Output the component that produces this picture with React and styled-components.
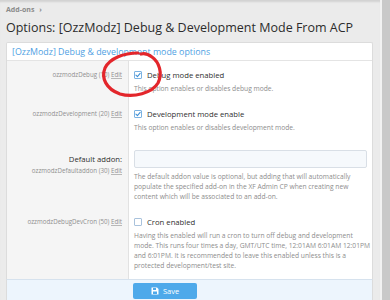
import React from "react";
import styled, { createGlobalStyle } from "styled-components";

const GlobalStyle = createGlobalStyle`
  html, body { margin: 0; padding: 0; }
  body {
    background: #ebebeb;
    font-family: "Open Sans", "Noto Sans", "Liberation Sans", sans-serif;
    color: #2d2d2d;
  }
`;

const Page = styled.div`
  position: relative;
  display: flex;
  width: 390px;
  height: 300px;
  overflow: hidden;
  background: #ebebeb;
`;

const Main = styled.div`
  flex: 1;
  padding: 0 7px 0 6px;
  box-shadow: inset 0 3px 2px -1px #d2d2d2;
`;

const Scrollbar = styled.div`
  width: 8px;
  border-left: 2px solid #f2f2f2;
  background: #c9c9c9;
`;

const Breadcrumb = styled.div`
  padding-top: 6px;
  font-size: 7px;
  font-weight: 700;
  color: #8a8a8a;
  display: flex;
  gap: 5px;
  line-height: 8px;
`;

const Title = styled.h1`
  margin: 5px 0 0;
  font-size: 12.5px;
  font-weight: 400;
  color: #2b2b2b;
  line-height: 18px;
  white-space: nowrap;
`;

const Block = styled.div`
  margin-top: 5px;
  background: #fff;
  border: 1px solid #dcdcdc;
  border-bottom: none;
  border-radius: 2px 2px 0 0;
`;

const BlockHeader = styled.div`
  height: 17px;
  padding: 0 5px;
  display: flex;
  align-items: center;
  font-size: 8.85px;
  color: #4f9fe3;
  border-bottom: 1px solid #e4e4e4;
`;

const FormRow = styled.div`
  display: grid;
  grid-template-columns: 121px 1fr;
`;

const LabelCell = styled.div`
  background: #f5f5f5;
  text-align: right;
  padding: ${(p) => p.$pt || 8}px 6px ${(p) => p.$pb || 6}px 0;
`;

const ContentCell = styled.div`
  border-left: 1px solid #e2e2e2;
  padding: ${(p) => p.$pt || 8}px 3px ${(p) => p.$pb || 6}px 5px;
  min-width: 0;
`;

const SmallLabel = styled.div`
  font-size: 6.2px;
  color: #8f8f8f;
  line-height: ${(p) => p.$lh || 12}px;
  white-space: nowrap;
`;

const EditLink = styled.span`
  text-decoration: underline;
  text-decoration-color: #b8b8b8;
`;

const MainLabel = styled.div`
  font-size: 7.7px;
  color: #2f2f2f;
  line-height: 18px;
  white-space: nowrap;
`;

const CheckLine = styled.label`
  display: flex;
  align-items: center;
  gap: 5px;
  height: 12px;
  font-size: 7.7px;
  color: #2f2f2f;
`;

const Box = styled.span`
  width: 8px;
  height: 8px;
  box-sizing: border-box;
  border: 1px solid ${(p) => (p.$checked ? "#7bb2e2" : "#a9c2dc")};
  border-radius: 1px;
  background: #fff;
  display: flex;
  align-items: center;
  justify-content: center;
`;

const Hint = styled.div`
  margin-top: ${(p) => p.$mt || 3}px;
  font-size: 6.7px;
  line-height: ${(p) => p.$lh || 10}px;
  color: #8d8d8d;
  white-space: pre;
`;

const Input = styled.div`
  height: 18px;
  box-sizing: border-box;
  border: 1px solid #d9dfe6;
  border-radius: 2px;
  background: #f6f9fc;
  margin-right: 2px;
`;

const Footer = styled.div`
  background: #edf5fd;
  border: 1px solid #dcdcdc;
  border-top: 1px solid #d6e2ee;
  padding: 3px 0 6px 126px;
`;

const Button = styled.button`
  width: 64px;
  height: 16px;
  border: none;
  border-radius: 2px;
  background: #4ea9ea;
  color: #fff;
  font-family: inherit;
  font-size: 7.5px;
  display: flex;
  align-items: center;
  justify-content: center;
  gap: 4px;
  padding: 0;
`;

const Annotation = styled.svg`
  position: absolute;
  left: 0;
  top: 0;
  pointer-events: none;
`;

const Check = () => (
  <svg width="6" height="6" viewBox="0 0 10 10">
    <path d="M1.5 5.2 L4 7.6 L8.6 2.4" fill="none" stroke="#3d8fd6" strokeWidth="1.8" strokeLinecap="round" strokeLinejoin="round" />
  </svg>
);

const SaveIcon = () => (
  <svg width="8" height="8" viewBox="0 0 16 16">
    <path d="M1 1h11l3 3v11H1z" fill="#fff" />
    <rect x="4" y="2" width="6" height="4" fill="#4ea9ea" />
    <rect x="4" y="9" width="8" height="5" fill="#4ea9ea" />
  </svg>
);

export default function App() {
  return (
    <Page>
      <GlobalStyle />
      <Main>
        <Breadcrumb>
          <span>Add-ons</span>
          <span>›</span>
        </Breadcrumb>
        <Title>Options: [OzzModz] Debug &amp; Development Mode From ACP</Title>
        <Block>
          <BlockHeader>[OzzModz] Debug &amp; development mode options</BlockHeader>

          <FormRow>
            <LabelCell>
              <SmallLabel>ozzmodzDebug (10) <EditLink>Edit</EditLink></SmallLabel>
            </LabelCell>
            <ContentCell>
              <CheckLine>
                <Box $checked><Check /></Box>
                Debug mode enabled
              </CheckLine>
              <Hint>This option enables or disables debug mode.</Hint>
            </ContentCell>
          </FormRow>

          <FormRow>
            <LabelCell>
              <SmallLabel>ozzmodzDevelopment (20) <EditLink>Edit</EditLink></SmallLabel>
            </LabelCell>
            <ContentCell>
              <CheckLine>
                <Box $checked><Check /></Box>
                Development mode enable
              </CheckLine>
              <Hint>This option enables or disables development mode.</Hint>
            </ContentCell>
          </FormRow>

          <FormRow>
            <LabelCell $pt={11}>
              <MainLabel>Default addon:</MainLabel>
              <SmallLabel $lh={5}>ozzmodzDefaultaddon (30) <EditLink>Edit</EditLink></SmallLabel>
            </LabelCell>
            <ContentCell $pt={11}>
              <Input />
              <Hint $mt={4}>
                {"The default addon value is optional, but adding that will automatically\npopulate the specified add-on in the XF Admin CP when creating new\ncontent which will be associated to an add-on."}
              </Hint>
            </ContentCell>
          </FormRow>

          <FormRow>
            <LabelCell $pb={8}>
              <SmallLabel>ozzmodzDebugDevCron (50) <EditLink>Edit</EditLink></SmallLabel>
            </LabelCell>
            <ContentCell $pb={8}>
              <CheckLine>
                <Box />
                Cron enabled
              </CheckLine>
              <Hint>
                {"Having this enabled will run a cron to turn off debug and development\nmode. This runs four times a day, GMT/UTC time, 12:01AM 6:01AM 12:01PM\nand 6:01PM. It is recommended to leave this enabled unless this is a\nprotected development/test site."}
              </Hint>
            </ContentCell>
          </FormRow>
        </Block>
        <Footer>
          <Button>
            <SaveIcon />
            Save
          </Button>
        </Footer>
      </Main>
      <Scrollbar />
      <Annotation width="390" height="300" viewBox="0 0 390 300">
        <path
          d="M138,53 C124,53 110,58 105,68 C101,78 106,89 120,94 C134,98 152,93 158,83 C163,73 159,62 152,57 C148,54 144,53 141,54"
          fill="none"
          stroke="#e3262b"
          strokeWidth="3.2"
          strokeLinecap="round"
        />
      </Annotation>
    </Page>
  );
}
